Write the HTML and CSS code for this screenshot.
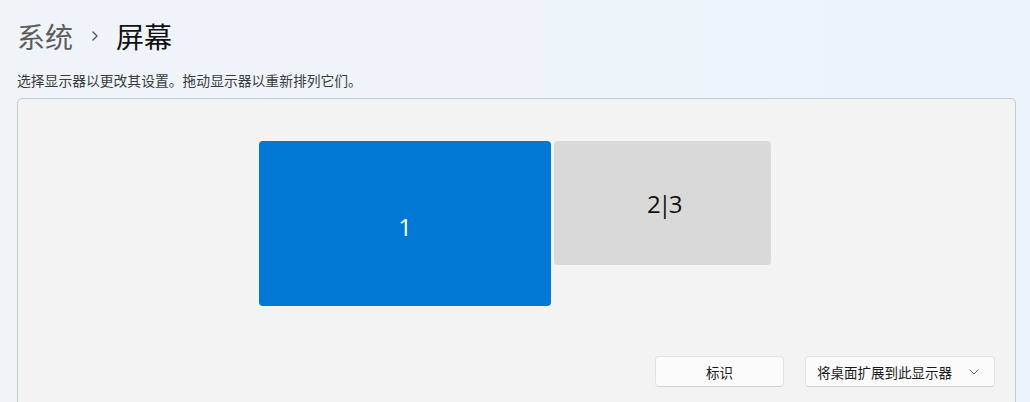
FILE: index.html
```html
<!DOCTYPE html>
<html lang="zh-CN">
<head>
<meta charset="utf-8">
<link rel="stylesheet" href="styles.css">
</head>
<body>
<div class="page">
  <h1 class="title">
    <span class="crumb">系统</span>
    <svg class="chev" width="10" height="12" viewBox="0 0 10 12"><path d="M3 2 L7 6 L3 10" fill="none" stroke="#555" stroke-width="1.4" stroke-linecap="round" stroke-linejoin="round"/></svg>
    <span class="current">屏幕</span>
  </h1>
  <p class="hint">选择显示器以更改其设置。拖动显示器以重新排列它们。</p>
  <div class="card">
    <div class="monitors">
      <div class="mon mon1">1</div>
      <div class="mon mon2">2|3</div>
    </div>
    <div class="actions">
      <button class="btn btn-id">标识</button>
      <button class="btn btn-drop">将桌面扩展到此显示器
        <svg class="dd" width="10" height="6" viewBox="0 0 10 6"><path d="M1 1 L5 5 L9 1" fill="none" stroke="#666" stroke-width="1" stroke-linecap="round" stroke-linejoin="round"/></svg>
      </button>
    </div>
  </div>
</div>
</body>
</html>
```
FILE: styles.css
```css
html, body {
  margin: 0;
  padding: 0;
  height: 100%;
  overflow: hidden;
}
body {
  background: linear-gradient(90deg, #eff4f9 0%, #ecf3fa 100%);
  font-family: "Noto Sans CJK SC", "Noto Sans", sans-serif;
  color: #1a1a1a;
}
.page {
  padding: 0 14px 0 17px;
}
.title {
  margin: 0;
  height: 70px;
  display: flex;
  align-items: center;
  font-weight: 400;
  font-size: 28px;
  line-height: 1;
  padding-top: 2px;
  box-sizing: border-box;
}
.crumb { color: #5d5d5d; }
.chev { margin: 0 16px 0 17px; }
.current { color: #111; font-weight: 400; }
.hint {
  margin: 0;
  font-size: 13.8px;
  line-height: 20px;
  color: #3a3a3a;
  height: 28px;
}
.card {
  background: #f3f3f3;
  border: 1px solid #c5ced3;
  border-radius: 5px;
  height: 400px;
  box-sizing: border-box;
}
.monitors {
  display: flex;
  justify-content: center;
  align-items: flex-start;
  gap: 3px;
  padding-top: 42px;
  padding-left: 0;
  padding-right: 3px;
  height: 208px;
  box-sizing: border-box;
}
.mon {
  border-radius: 4px;
  display: flex;
  align-items: center;
  justify-content: center;
  font-family: "Open Sans", "Noto Sans", sans-serif;
  font-size: 24px;
}
.mon1 {
  width: 292px;
  height: 165px;
  background: #0078d4;
  color: #fff;
  padding-top: 5px;
  box-sizing: border-box;
}
.mon2 {
  width: 217px;
  height: 124px;
  background: #d9d9d9;
  color: #111;
  letter-spacing: -2.5px;
  padding-left: 2px;
  box-sizing: border-box;
}
.actions {
  display: flex;
  justify-content: flex-end;
  gap: 21px;
  padding-top: 49px;
  padding-right: 20px;
}
.btn {
  height: 31px;
  background: #fbfbfb;
  border: 1px solid #e3e3e3;
  border-bottom-color: #d2d2d2;
  border-radius: 4px;
  font-family: "Noto Sans CJK SC", sans-serif;
  font-size: 13.5px;
  color: #1a1a1a;
  display: flex;
  align-items: center;
  justify-content: center;
  padding: 0;
}
.btn-id { width: 129px; }
.btn-drop {
  width: 190px;
  justify-content: flex-start;
  padding-left: 11px;
  box-sizing: border-box;
}
.dd { margin-left: 17px; }
```
